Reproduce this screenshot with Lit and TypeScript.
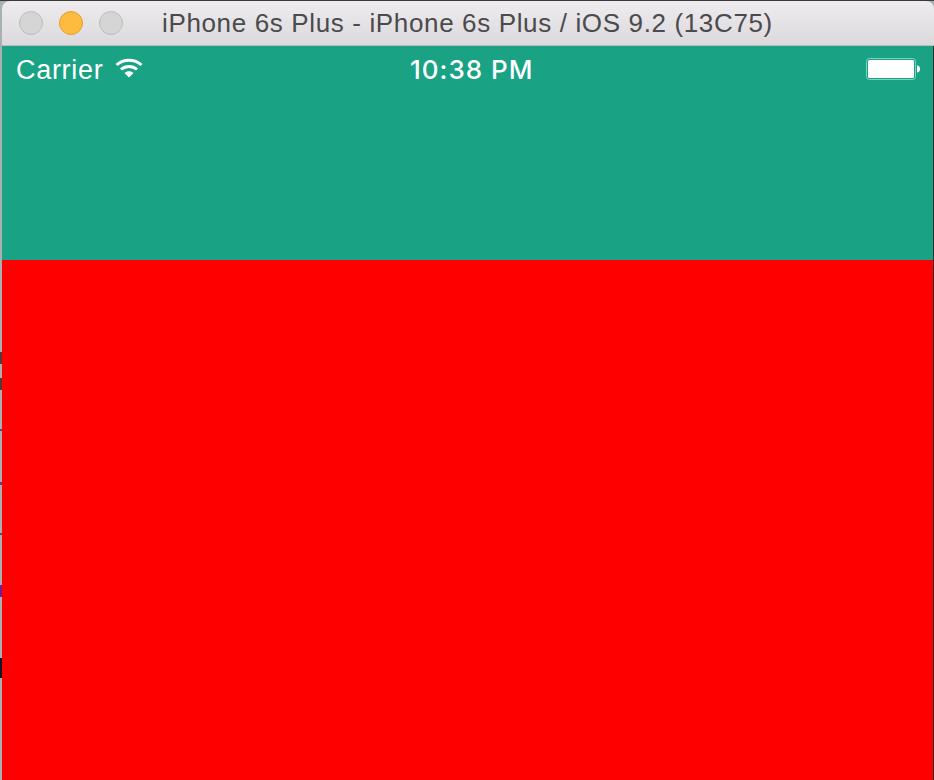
import { LitElement, html, css } from "lit";
import { customElement } from "lit/decorators.js";

const MARKS = [
  { top: 352, h: 12, c: "#5a3a30" },
  { top: 378, h: 12, c: "#5a3a30" },
  { top: 429, h: 2, c: "#8a2a8a" },
  { top: 482, h: 3, c: "#8a2a8a" },
  { top: 533, h: 2, c: "#8a2a8a" },
  { top: 585, h: 12, c: "#7a1a9a" },
  { top: 658, h: 20, c: "#101828" },
];

@customElement("app-root")
export class AppRoot extends LitElement {
  static styles = css`
    :host {
      display: block;
      width: 934px;
      height: 780px;
      overflow: hidden;
      background: #a9b0b0;
    }
    .window {
      height: 780px;
      display: flex;
      flex-direction: column;
      background: #a9b0b0;
      box-sizing: border-box;
      border-top: 1px solid #3a3a3a;
    }
    .titlebar {
      height: 45px;
      flex: none;
      box-sizing: border-box;
      display: flex;
      align-items: center;
      margin-left: 2px;
      padding-left: 17px;
      background: linear-gradient(#eeecee, #dbd9db);
      border-bottom: 1px solid #bdbcbd;
      border-radius: 8px 8px 0 0;
    }
    .lights {
      display: flex;
      gap: 16px;
    }
    .light {
      width: 24px;
      height: 24px;
      box-sizing: border-box;
      border-radius: 50%;
      border: 1px solid #bcbcbc;
      background: #d6d5d6;
    }
    .light.min {
      background: #fdbc40;
      border-color: #e0a030;
    }
    .title {
      margin-left: 39px;
      font: 26px "Liberation Sans", Arial, sans-serif;
      letter-spacing: 0.64px;
      color: #4b4a4c;
      white-space: nowrap;
    }
    .body {
      flex: 1;
      display: flex;
      min-height: 0;
    }
    .edge {
      width: 2px;
      flex: none;
      position: relative;
      background: #a9b0b0;
    }
    .mark {
      position: absolute;
      left: 0;
      width: 2px;
    }
    .screen {
      flex: 1;
      display: flex;
      flex-direction: column;
      border-right: 1px solid #2a2a2a;
    }
    .green {
      height: 214px;
      flex: none;
      background: #19a283;
    }
    .status {
      height: 47px;
      display: grid;
      grid-template-columns: 394px auto 1fr;
      align-items: center;
      padding: 0 13px 0 14px;
      color: #fff;
      font-family: "Liberation Sans", Arial, sans-serif;
    }
    .left {
      display: flex;
      align-items: center;
      gap: 12px;
      margin-top: 2px;
      font-size: 27px;
      letter-spacing: 0.7px;
    }
    .left svg {
      margin-top: -7px;
    }
    .time {
      font-family: Inter, "Liberation Sans", sans-serif;
      font-size: 26px;
      font-weight: 500;
      letter-spacing: 1px;
    }
    .right {
      display: flex;
      justify-content: flex-end;
    }
    .red {
      flex: 1;
      background: #ff0000;
    }
  `;

  private wifi() {
    return html`<svg width="28" height="21" viewBox="0 0 28 21" fill="none" stroke="#fff" stroke-width="3">
      <path d="M1.5 8 C8.5 1.5 19.5 1.5 26.5 8" />
      <path d="M6 12.5 C10.5 8.5 17.5 8.5 22 12.5" />
      <path d="M14 20.5 L9.5 16 C12 13.8 16 13.8 18.5 16 Z" fill="#fff" stroke="none" />
    </svg>`;
  }

  private battery() {
    return html`<svg width="54" height="23" viewBox="0 0 54 23">
      <rect x="0.5" y="0.5" width="49" height="21" rx="3" fill="none" stroke="#7fd3c0" />
      <rect x="2" y="2" width="46" height="18" rx="1.5" fill="#fff" />
      <path d="M51 7.5 C53 7.5 54 9 54 11 C54 13 53 14.5 51 14.5 Z" fill="#fff" />
    </svg>`;
  }

  render() {
    return html`<div class="window">
      <div class="titlebar">
        <div class="lights">
          <div class="light"></div>
          <div class="light min"></div>
          <div class="light"></div>
        </div>
        <div class="title">iPhone 6s Plus - iPhone 6s Plus / iOS 9.2 (13C75)</div>
      </div>
      <div class="body">
        <div class="edge">
          ${MARKS.map(
            (m) =>
              html`<div class="mark" style="top:${m.top - 46}px;height:${m.h}px;background:${m.c}"></div>`
          )}
        </div>
        <div class="screen">
          <div class="green">
            <div class="status">
              <div class="left"><span>Carrier</span>${this.wifi()}</div>
              <div class="time">10:38 PM</div>
              <div class="right">${this.battery()}</div>
            </div>
          </div>
          <div class="red"></div>
        </div>
      </div>
    </div>`;
  }
}
